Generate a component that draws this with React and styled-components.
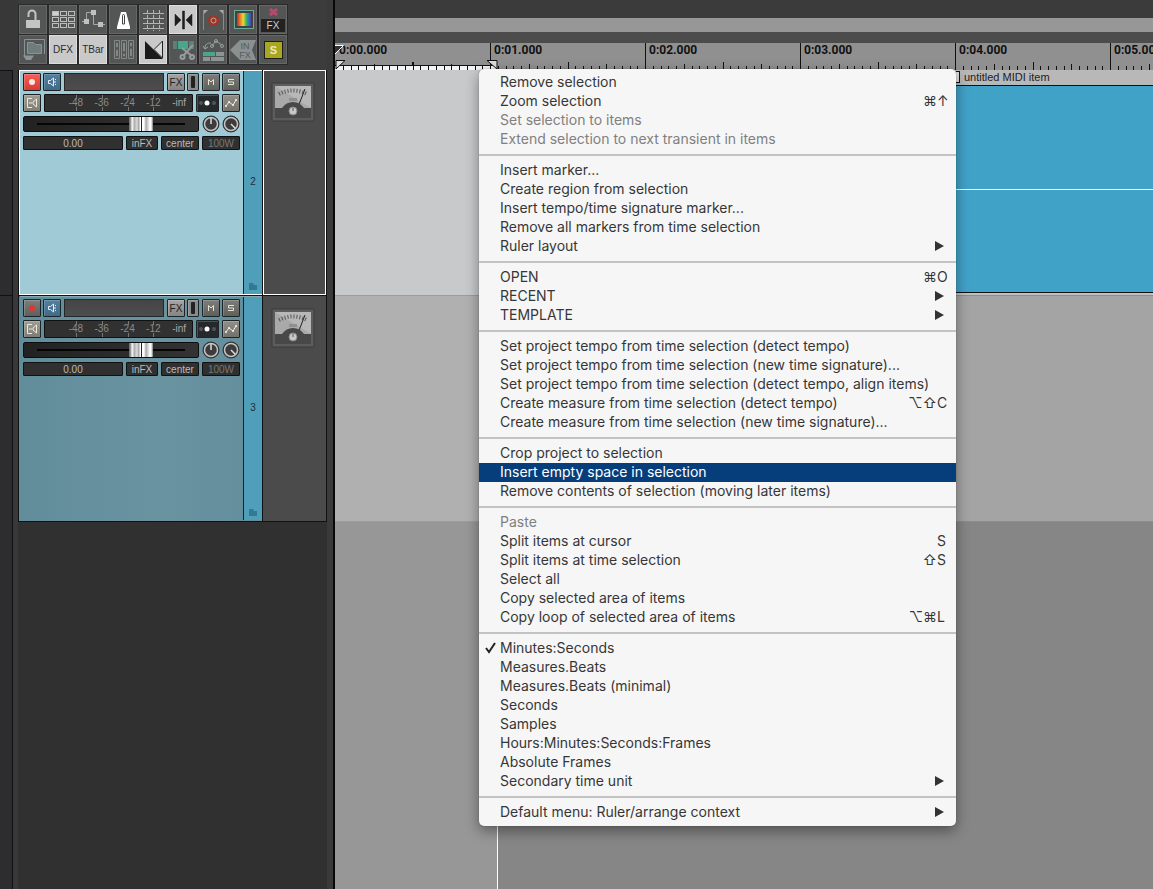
import React, { useState } from "react";
import styled, { createGlobalStyle, css } from "styled-components";

const GlobalStyle = createGlobalStyle`
  * {
    box-sizing: border-box;
  }
  body {
    margin: 0;
    background: #303030;
    font-family: "Liberation Sans", Arial, sans-serif;
  }
  button, input {
    font-family: inherit;
    margin: 0;
    padding: 0;
    border: 0;
  }
  svg {
    display: block;
  }
`;

const Page = styled.div`
  display: flex;
  min-height: 100vh;
  overflow: hidden;
`;

/* ---------- left side ---------- */

const SideDock = styled.div`
  flex: none;
  width: 18px;
  padding-top: 70px;
  background: #383838;
`;

const SideCell = styled.div`
  width: 13px;
  height: ${(p) => p.$height};
  background: #2d2d2f;
  border: solid #111;
  border-width: 1px 1px 0 0;
`;

const ControlPanel = styled.div`
  flex: none;
  width: 309px;
  background: #303030;
`;

const Toolbar = styled.div`
  display: grid;
  grid-template-columns: repeat(9, 28px);
  grid-auto-rows: 29px;
  gap: 1px 2px;
  padding: 5px 1px 6px;
  background: #3c3c3c;
`;

const ToolButton = styled.button`
  display: flex;
  align-items: center;
  justify-content: center;
  background: ${(p) => (p.$on ? "#c9c9c9" : "#545656")};
  border: 1px solid ${(p) => (p.$on ? "#dedede" : "#676767")};
  box-shadow: 0 0 0 1px #2a2a2a;
  color: #2c2c2c;
  font-size: 10px;
`;

const Track = styled.section`
  display: flex;
  height: 226px;
  border: solid #111;
  border-width: 0 1px 1px;
`;

const selectedFrame = css`
  border-color: #fff;
`;

const TrackControls = styled.div`
  display: flex;
  flex: 1;
  border: 1px solid transparent;
  border-top-color: #86a9b4;
  background: ${(p) =>
    p.$selected ? "#9fcad6" : "linear-gradient(90deg, #618d9b, #6a93a0 60%, #628d9b)"};
  ${(p) => p.$selected && selectedFrame}
`;

const ControlRows = styled.div`
  display: flex;
  flex-direction: column;
  flex: 1;
  gap: 3px;
  padding: 2px 3px;
`;

const Row = styled.div`
  display: flex;
  align-items: center;
  justify-content: space-between;
`;

const Group = styled.div`
  display: flex;
  gap: 2px;
`;

const SmallButton = styled.button`
  display: flex;
  align-items: center;
  justify-content: center;
  width: ${(p) => p.$width || "18px"};
  height: 18px;
  border: 1px solid #1d2426;
  border-radius: 1px;
  background: ${(p) => p.$color || "linear-gradient(#7d7d7b, #5f5f5d)"};
  box-shadow: inset 1px 1px 0 rgba(255, 255, 255, 0.18);
  color: ${(p) => p.$ink || "#e2dfc8"};
  font-size: 10px;
`;

const NameInput = styled.input`
  width: 100px;
  height: 18px;
  border: 1px solid #23292b;
  background: linear-gradient(#454545, #4d4d4d);
  color: #ccc;
  font-size: 10px;
`;

const Meter = styled.div`
  display: flex;
  width: 149px;
  height: 18px;
  padding-left: 18px;
  border: 1px solid #111;
  border-radius: 1px;
  background: #313131;
`;

const MeterMark = styled.span`
  width: 26px;
  line-height: 16px;
  text-align: center;
  font-size: 10px;
  color: #8b8b8b;
  background:
    linear-gradient(#777, #777) 13px 0 / 1px 4px no-repeat,
    linear-gradient(#777, #777) 13px 12px / 1px 4px no-repeat;
  &:last-child {
    color: #a8a8a8;
    background: none;
  }
`;

const Fader = styled.input`
  appearance: none;
  width: 176px;
  height: 16px;
  margin-block: 1px;
  border: 1px solid #0d0d0d;
  border-radius: 2px;
  background:
    linear-gradient(#050505, #050505) center / 148px 2px no-repeat,
    linear-gradient(90deg, #222, #333);
  &::-webkit-slider-thumb {
    appearance: none;
    width: 24px;
    height: 14px;
    background: linear-gradient(
      90deg, #777 0 1px, #eee 3px 4px, #a8a8a8 5px, #ddd 8px, #999 10px, #fff 11px 12px,
      #222 12px 13px, #fff 13px 15px, #aaa 17px, #d5d5d5 19px, #fff 21px 22px, #777 24px
    );
  }
`;

const Readout = styled.span`
  width: ${(p) => p.$width};
  height: 14px;
  border: 1px solid #111;
  border-radius: 1px;
  background: #303030;
  text-align: center;
  line-height: 13px;
  font-size: 10px;
  color: ${(p) => (p.$dim ? "#777" : "#bbb")};
`;

const ColorStrip = styled.div`
  display: flex;
  flex-direction: column;
  align-items: center;
  justify-content: space-between;
  width: 19px;
  padding: 106px 0 4px;
  border-left: 1px solid #123;
  background: #4f9fba;
  color: #1a3038;
  font-size: 10px;
  line-height: 10px;
`;

const VuPanel = styled.div`
  width: 63px;
  padding: 11px 7px;
  border: 1px solid #4b4b4b;
  background: #4b4b4b;
  box-shadow: -1px 0 0 #111;
  ${(p) => p.$selected && selectedFrame}
`;

const Divider = styled.div`
  flex: none;
  width: 8px;
  background: #3a3a3a;
  border-right: 2px solid #080808;
`;

/* ---------- arrange view ---------- */

const Arrange = styled.main`
  position: relative;
  flex: 1;
  min-width: 0;
  display: flex;
  flex-direction: column;
  background: #868686;
`;

const RegionBar = styled.div`
  height: 43px;
  border-top: 18px solid #3b3b3b;
  border-bottom: 11px solid #4c4c4c;
  background: #979797;
`;

const Ruler = styled.div`
  position: relative;
  display: flex;
  height: 27px;
  background: #909090;
  overflow: hidden;
`;

const Second = styled.div`
  display: flex;
  flex: none;
  flex-direction: column;
  justify-content: space-between;
  width: 155px;
  border-left: 1px solid ${(p) => (p.$first ? "transparent" : "#111")};
  font: bold 12px/14px Roboto, sans-serif;
  color: #111;
  span {
    padding-left: 3px;
  }
`;

const RulerMarks = styled.svg`
  position: absolute;
  left: 0;
  top: 0;
`;

const Lane = styled.div`
  position: relative;
  height: 226px;
  background: ${(p) => p.$color};
  border-bottom: 1px solid #8c8c8c;
`;

const TimeSelection = styled.div`
  position: absolute;
  top: 70px;
  bottom: 0;
  left: 0;
  width: 163px;
  border-right: 1px solid #fff;
  background: rgba(255, 255, 255, 0.14);
`;

const MidiItem = styled.div`
  position: absolute;
  left: 621px;
  right: 0;
  top: 0;
  height: 223px;
  display: flex;
  flex-direction: column;
  border-bottom: 1px solid #111;
`;

const ItemTitle = styled.div`
  display: flex;
  align-items: center;
  gap: 4px;
  height: 16px;
  padding-bottom: 2px;
  border-bottom: 1px solid #111;
  background: #b8b8b8;
  color: #222;
  font-size: 11px;
  white-space: nowrap;
`;

const ItemHandle = styled.i`
  width: 4px;
  height: 12px;
  border: 1px solid #111;
  border-left: 0;
  background: #ddd;
`;

const ItemBody = styled.div`
  flex: 1;
  background: linear-gradient(#fff, #fff) 0 50% / 100% 1px no-repeat #41a2c8;
`;

/* ---------- context menu ---------- */

const Menu = styled.div`
  position: absolute;
  top: 69px;
  left: 144px;
  width: 477px;
  padding: 4px 0;
  border-radius: 5px;
  background: #f6f6f6;
  box-shadow: 0 0 1px rgba(0, 0, 0, 0.5), 0 5px 14px rgba(0, 0, 0, 0.4);
`;

const MenuSection = styled.div`
  & + & {
    border-top: 2px solid #c3c3c3;
    margin-top: 5px;
    padding-top: 5px;
  }
`;

const MenuItem = styled.button`
  display: flex;
  align-items: center;
  width: 100%;
  height: 19px;
  padding-bottom: 2px;
  background: none;
  color: #363636;
  font: 14px/17px Inter, sans-serif;
  text-align: left;
  &:disabled {
    color: #808080;
  }
  ${(p) =>
    p.$active &&
    css`
      background: #063e7b;
      color: #fff;
    `}
`;

const CheckSlot = styled.span`
  width: 21px;
  padding-left: 5px;
`;

const ItemLabel = styled.span`
  flex: 1;
`;

const ShortcutKey = styled.span`
  width: 19px;
`;

const SubmenuArrow = styled.svg`
  margin-right: 12px;
`;

const menuSections = [
  [
    { label: "Remove selection" },
    { label: "Zoom selection", mod: "⌘", keyName: "↑" },
    { label: "Set selection to items", disabled: true },
    { label: "Extend selection to next transient in items", disabled: true },
  ],
  [
    { label: "Insert marker..." },
    { label: "Create region from selection" },
    { label: "Insert tempo/time signature marker..." },
    { label: "Remove all markers from time selection" },
    { label: "Ruler layout", submenu: true },
  ],
  [
    { label: "OPEN", mod: "⌘", keyName: "O" },
    { label: "RECENT", submenu: true },
    { label: "TEMPLATE", submenu: true },
  ],
  [
    { label: "Set project tempo from time selection (detect tempo)" },
    { label: "Set project tempo from time selection (new time signature)..." },
    { label: "Set project tempo from time selection (detect tempo, align items)" },
    { label: "Create measure from time selection (detect tempo)", mod: "⌥⇧", keyName: "C" },
    { label: "Create measure from time selection (new time signature)..." },
  ],
  [
    { label: "Crop project to selection" },
    { label: "Insert empty space in selection" },
    { label: "Remove contents of selection (moving later items)" },
  ],
  [
    { label: "Paste", disabled: true },
    { label: "Split items at cursor", keyName: "S" },
    { label: "Split items at time selection", mod: "⇧", keyName: "S" },
    { label: "Select all" },
    { label: "Copy selected area of items" },
    { label: "Copy loop of selected area of items", mod: "⌥⌘", keyName: "L" },
  ],
  [
    { label: "Minutes:Seconds", checked: true },
    { label: "Measures.Beats" },
    { label: "Measures.Beats (minimal)" },
    { label: "Seconds" },
    { label: "Samples" },
    { label: "Hours:Minutes:Seconds:Frames" },
    { label: "Absolute Frames" },
    { label: "Secondary time unit", submenu: true },
  ],
  [{ label: "Default menu: Ruler/arrange context", submenu: true }],
];

const tools = [
  {
    name: "Project lock",
    icon: (
      <>
        <path d="M6 14h14v8H6z" fill="#c4c4c4" />
        <path d="M8.500 11V8a3.500 3.500 0 0 1 7 0v7" fill="none" stroke="#c4c4c4" strokeWidth="2" />
      </>
    ),
  },
  {
    name: "Item grouping",
    icon: (
      <g fill="none" stroke="#bdbdbd">
        {[0, 1, 2].map((r) =>
          [0, 1, 2].map((c) => (
            <rect
              key={`${r}${c}`}
              x={2.5 + c * 8}
              y={5.5 + r * 6}
              width="6"
              height="4"
              fill={r + c === 0 ? "#d0d0d0" : "none"}
            />
          ))
        )}
      </g>
    ),
  },
  {
    name: "Move envelope points",
    icon: (
      <g fill="#c0c0c0">
        <path d="M2 15.5h4.500V6.500h7v12H25" fill="none" stroke="#a8a8a8" />
        <path d="M11 4h5v5h-5zM4 13h5v5H4zM18 16h5v5h-5z" />
      </g>
    ),
  },
  {
    name: "Metronome",
    icon: (
      <>
        <path d="M11 6h5l4 15v2H7v-2z" fill="#fff" />
        <path d="M12.5 18V9.500a1 1 0 0 1 2 0V18z" fill="#fff" stroke="#444" />
      </>
    ),
  },
  {
    name: "Grid lines",
    icon: (
      <g stroke="#b5b5b5" fill="none">
        <path d="M3 7.500h21M3 12.500h21M3 17.500h21M3 22.500h21" />
        <path d="M7.500 4v21M13.500 4v21M19.500 4v21" strokeDasharray="3 2" />
      </g>
    ),
  },
  {
    name: "Snap",
    on: true,
    icon: (
      <path d="M5 8v12l6-6zM22 8v12l-6-6zM12.500 5h2v18h-2z" fill="#1e1e1e" stroke="#1e1e1e" strokeWidth=".5" />
    ),
  },
  {
    name: "Ripple record",
    icon: (
      <>
        <path d="M3.500 24V4M23.500 24V4" fill="none" stroke="#8b8b8b" />
        <path d="M4 4h4l-4 4zM23 4h-4l4 4z" fill="#a5a5a5" />
        <circle cx="13.500" cy="14.500" r="5.500" fill="#98382b" />
        <circle cx="13.500" cy="14.500" r="2.500" fill="none" stroke="#d8a090" />
      </>
    ),
  },
  {
    name: "Track colors",
    icon: (
      <>
        <defs>
          <linearGradient id="rainbow">
            <stop offset="0" stopColor="#c62f2a" />
            <stop offset=".25" stopColor="#e8872a" />
            <stop offset=".45" stopColor="#e6d83a" />
            <stop offset=".65" stopColor="#3fb757" />
            <stop offset=".85" stopColor="#2f74c4" />
            <stop offset="1" stopColor="#5b3fa0" />
          </linearGradient>
        </defs>
        <rect x="4.500" y="4.500" width="19" height="18" fill="#3d4544" stroke="#6fa79b" />
        <rect x="7" y="7" width="14" height="13" fill="url(#rainbow)" />
      </>
    ),
  },
  {
    name: "Bypass FX",
    icon: (
      <>
        <path d="M10 3l7 6M17 3l-7 6" stroke="#b54a70" strokeWidth="3" />
        <rect x="1" y="13" width="24" height="13" fill="#222" />
        <text x="13" y="23" textAnchor="middle" fontSize="10" fill="#d0d0d0">FX</text>
      </>
    ),
  },
  {
    name: "Folder view",
    icon: (
      <g fill="#707b7d" stroke="#889395">
        <path d="M4.500 20V3.500h20V18" fill="none" />
        <path d="M7.500 6.500h6l2 2h6v9h-14z" />
        <path d="M3 19.500h11l-3 4.500H6z" stroke="none" fill="#8b9596" />
      </g>
    ),
  },
  { name: "DFX", on: true, text: "DFX" },
  { name: "TBar", on: true, text: "TBar" },
  {
    name: "Mixer",
    icon: (
      <g fill="none" stroke="#838989">
        <path d="M4.500 4.500h5v18h-5zM11.500 4.500h5v18h-5zM18.500 4.500h5v18h-5z" />
        <path d="M6.500 7h1v4h-1zM6.500 14h1v6h-1zM13.500 7h1v8h-1zM13.500 18h1v2h-1zM20.500 7h1v3h-1zM20.500 13h1v7h-1z" />
      </g>
    ),
  },
  {
    name: "Auto crossfade",
    on: true,
    icon: (
      <>
        <path d="M5 5v18h18z" fill="#1b1b1b" />
        <path d="M22.500 5v17L14 13.500z" fill="#d8d8d8" stroke="#222" />
      </>
    ),
  },
  {
    name: "Split tool",
    icon: (
      <>
        <path d="M8 5h10v8H8z" fill="#4aa58d" />
        <path d="M3 5h4v8H3zM19 5h5v8h-5z" fill="#5d807a" />
        <g fill="none" stroke="#959c9c" strokeWidth="2">
          <path d="M23 9L14 19M12 12l10 8" />
          <circle cx="12.500" cy="21" r="2" />
          <circle cx="22" cy="21" r="2" />
        </g>
      </>
    ),
  },
  {
    name: "Envelope items",
    icon: (
      <>
        <path d="M3 16h12v4H3z" fill="#4aa58d" />
        <path d="M16 16h8v4h-8zM3 21h7v4H3zM11 21h13v4H11z" fill="#8d9494" />
        <g fill="none" stroke="#9aa0a0">
          <path d="M5 13c0-5 2-6 6-6M12 10l4-5 6 4" />
          <circle cx="12" cy="10" r="1.500" />
          <circle cx="16" cy="5" r="1.500" />
          <circle cx="22" cy="10" r="1.500" />
          <path d="M3 10l2 3 3-2" />
        </g>
      </>
    ),
  },
  {
    name: "Input FX",
    icon: (
      <>
        <path d="M0 14L10 4h16l-4 10 4 10H10z" fill="#8b9090" />
        <text x="15" y="13" textAnchor="middle" fontSize="9" fill="#555a5a">IN</text>
        <text x="15" y="22" textAnchor="middle" fontSize="9" fill="#555a5a">FX</text>
      </>
    ),
  },
  {
    name: "Solo",
    icon: (
      <>
        <rect x="4.500" y="5.500" width="18" height="17" fill="#a9a61f" stroke="#1e1e1e" />
        <text x="13.500" y="18" textAnchor="middle" fontSize="11" fontWeight="bold" fill="#e9e9c4">S</text>
      </>
    ),
  },
];

const tracks = [
  { number: 2, selected: true, armed: true },
  { number: 3, selected: false, armed: false },
];

function Knob({ label, angle }) {
  return (
    <svg width="18" height="18" viewBox="0 0 18 18" role="img" aria-label={label}>
      <circle cx="9" cy="9" r="8" fill="#222" stroke="#333" />
      <circle cx="9" cy="9" r="6.500" fill="#3c3c3c" stroke="#c5c5c5" strokeWidth="1.500" />
      <path d="M9 9V3" stroke="#ddd" strokeWidth="1.500" transform={`rotate(${angle} 9 9)`} />
    </svg>
  );
}

function VuMeter() {
  return (
    <svg width="44" height="40" viewBox="0 0 44 40">
      <rect x="1" y="1" width="42" height="38" rx="1" fill="#5c5c5c" stroke="#3a3a3a" />
      <rect x="4" y="4" width="36" height="22" fill="#a9a9a9" />
      <path d="M4 4h36v22z" fill="#b8b8b8" />
      <path d="M8 12Q22 5 36 12" fill="none" stroke="#555" strokeWidth="4" strokeDasharray="1 2" />
      <rect x="18" y="16" width="8" height="3" fill="#909090" />
      <path d="M27 25L34 7" stroke="#222" />
      <path d="M4 26h7q4-6 11-6t11 6h7v10H4z" fill="#484848" />
      <circle cx="22" cy="29" r="4" fill="#c9c9c9" stroke="#888" />
      <path d="M22 26v3" stroke="#555" />
    </svg>
  );
}

function TrackPanel({ track }) {
  const [volume, setVolume] = useState(70);
  return (
    <Track>
      <TrackControls $selected={track.selected}>
        <ControlRows>
          <Row>
            <Group>
              <SmallButton
                aria-label="Record arm"
                $color={track.armed ? "linear-gradient(#f4605a, #d83a36)" : undefined}
              >
                <svg width="8" height="8">
                  <circle cx="4" cy="4" r="3" fill={track.armed ? "#fde6d8" : "#e0372c"} />
                </svg>
              </SmallButton>
              <SmallButton aria-label="Monitor input" $color="linear-gradient(#54809e, #3f6a8a)">
                <svg width="10" height="10" fill="none" stroke="#e8eef2">
                  <path d="M1.500 3.500h2L6.500 1v8L3.500 6.500h-2zM8 2.500h1M8 7.500h1M7 5h2" />
                </svg>
              </SmallButton>
            </Group>
            <NameInput aria-label="Track name" />
            <Group>
              <SmallButton $color="linear-gradient(#a5a5a5, #858585)" $ink="#222">FX</SmallButton>
              <SmallButton aria-label="FX bypass" $width="12px" $color="#8a8a8a">
                <svg width="4" height="12">
                  <rect width="4" height="12" rx="1" fill="#222" />
                </svg>
              </SmallButton>
            </Group>
            <Group>
              <SmallButton aria-label="Mute">
                <svg width="8" height="8" fill="none" stroke="#e8e4cc">
                  <path d="M1.500 7V1.500L4 4l2.500-2.500V7" />
                </svg>
              </SmallButton>
              <SmallButton aria-label="Solo">
                <svg width="8" height="8" fill="none" stroke="#e8e4cc">
                  <path d="M7 1.500H1.500v2.500h5v2.500H1" />
                </svg>
              </SmallButton>
            </Group>
          </Row>
          <Row>
            <SmallButton aria-label="Routing" $color="linear-gradient(#a09d94, #7f7c74)">
              <svg width="12" height="12" fill="none" stroke="#eeeadb">
                <path d="M6 1.500H1.500v9H6M3 6h3M10.500 2v8L7 7V5z" />
              </svg>
            </SmallButton>
            <Meter>
              {["-48", "-36", "-24", "-12", "-inf"].map((m) => (
                <MeterMark key={m}>{m}</MeterMark>
              ))}
            </Meter>
            <SmallButton aria-label="Automation" $width="23px" $color="#26292c">
              <svg width="19" height="6">
                <circle cx="3" cy="3" r="2" fill="#50555a" />
                <circle cx="9" cy="3" r="2.500" fill="#fff" />
                <circle cx="16" cy="3" r="2" fill="#50555a" />
              </svg>
            </SmallButton>
            <SmallButton aria-label="Envelopes" $color="linear-gradient(#918f88, #73716b)">
              <svg width="14" height="10" fill="#f2efdf" stroke="#f2efdf">
                <path d="M2 8l3-4 4 3 3-5" fill="none" />
                <path d="M1.500 7.500h1v1h-1zM4.500 3.500h1v1h-1zM8.500 6.500h1v1h-1zM11.500 1.500h1v1h-1z" />
              </svg>
            </SmallButton>
          </Row>
          <Row>
            <Fader
              type="range"
              aria-label="Volume"
              value={volume}
              onChange={(e) => setVolume(e.target.value)}
            />
            <Group>
              <Knob label="Pan" angle={0} />
              <Knob label="Width" angle={135} />
            </Group>
          </Row>
          <Row>
            <Readout $width="100px">0.00</Readout>
            <Readout $width="32px">inFX</Readout>
            <Readout $width="38px">center</Readout>
            <Readout $width="38px" $dim>100W</Readout>
          </Row>
        </ControlRows>
        <ColorStrip>
          {track.number}
          <svg width="8" height="7">
            <path d="M0 0h4l1 2h3v5H0z" fill="#337a91" />
          </svg>
        </ColorStrip>
      </TrackControls>
      <VuPanel $selected={track.selected}>
        <VuMeter />
      </VuPanel>
    </Track>
  );
}

function SecondTicks() {
  const ticks = [];
  for (let i = 1; i < 20; i++) {
    const x = Math.round(i * 7.75) - 1;
    const h = i % 10 === 0 ? 8 : i % 5 === 0 ? 6 : 4;
    ticks.push(<rect key={i} x={x} y={8 - h} width="1" height={h} fill="#111" />);
  }
  return (
    <svg width="154" height="8">
      {ticks}
    </svg>
  );
}

function ContextMenu() {
  const [active, setActive] = useState("Insert empty space in selection");
  return (
    <Menu role="menu">
      {menuSections.map((items, i) => (
        <MenuSection key={i}>
          {items.map((item) => (
            <MenuItem
              key={item.label}
              role="menuitem"
              disabled={item.disabled}
              $active={item.label === active}
              onMouseEnter={() => setActive(item.label)}
            >
              <CheckSlot>
                {item.checked && (
                  <svg width="13" height="13" fill="none" stroke="#222" strokeWidth="2">
                    <path d="M2 7l3 4 6-9" />
                  </svg>
                )}
              </CheckSlot>
              <ItemLabel>{item.label}</ItemLabel>
              {item.mod}
              {item.keyName && <ShortcutKey>{item.keyName}</ShortcutKey>}
              {item.submenu && (
                <SubmenuArrow width="10" height="10">
                  <path d="M1 0l9 5-9 5z" fill="#333" />
                </SubmenuArrow>
              )}
            </MenuItem>
          ))}
        </MenuSection>
      ))}
    </Menu>
  );
}

const App = () => {
  return (
    <Page>
      <GlobalStyle />
      <SideDock>
        <SideCell $height="225px" />
        <SideCell $height="calc(100% - 225px)" />
      </SideDock>
      <ControlPanel>
        <Toolbar>
          {tools.map((tool) => (
            <ToolButton key={tool.name} aria-label={tool.name} $on={tool.on}>
              {tool.text || (
                <svg width="26" height="27" viewBox="0 0 26 27">
                  {tool.icon}
                </svg>
              )}
            </ToolButton>
          ))}
        </Toolbar>
        {tracks.map((track) => (
          <TrackPanel key={track.number} track={track} />
        ))}
      </ControlPanel>
      <Divider />
      <Arrange>
        <RegionBar />
        <Ruler>
          {[0, 1, 2, 3, 4, 5].map((s) => (
            <Second key={s} $first={s === 0}>
              <span>{`0:0${s}.000`}</span>
              <SecondTicks />
            </Second>
          ))}
          <RulerMarks width="170" height="27">
            <path d="M0 2h9L0 11z" fill="#333" />
            <path d="M0 2.500h8.500L0 11" fill="none" stroke="#fff" />
            <path d="M0 22h162v5H0z" fill="#f4f4f4" />
            <path d="M0 22.500h162" stroke="#111" />
            {Array.from({ length: 20 }, (_, i) => (
              <rect key={i} x={Math.round((i + 1) * 7.75)} y="23" width="1" height="4" fill="#111" />
            ))}
            <path d="M39.500 21v2M77.500 19v4M116.500 21v2" stroke="#111" />
            <path d="M1 17.500h9L1 26zM152 17.500h10V26z" fill="#ddd" stroke="#111" />
          </RulerMarks>
        </Ruler>
        <Lane $color="#bfc0c2">
          <MidiItem>
            <ItemTitle>
              <ItemHandle />
              untitled MIDI item
            </ItemTitle>
            <ItemBody />
          </MidiItem>
        </Lane>
        <Lane $color="#a4a4a4" />
        <TimeSelection />
        <ContextMenu />
      </Arrange>
    </Page>
  );
};

export default App;
